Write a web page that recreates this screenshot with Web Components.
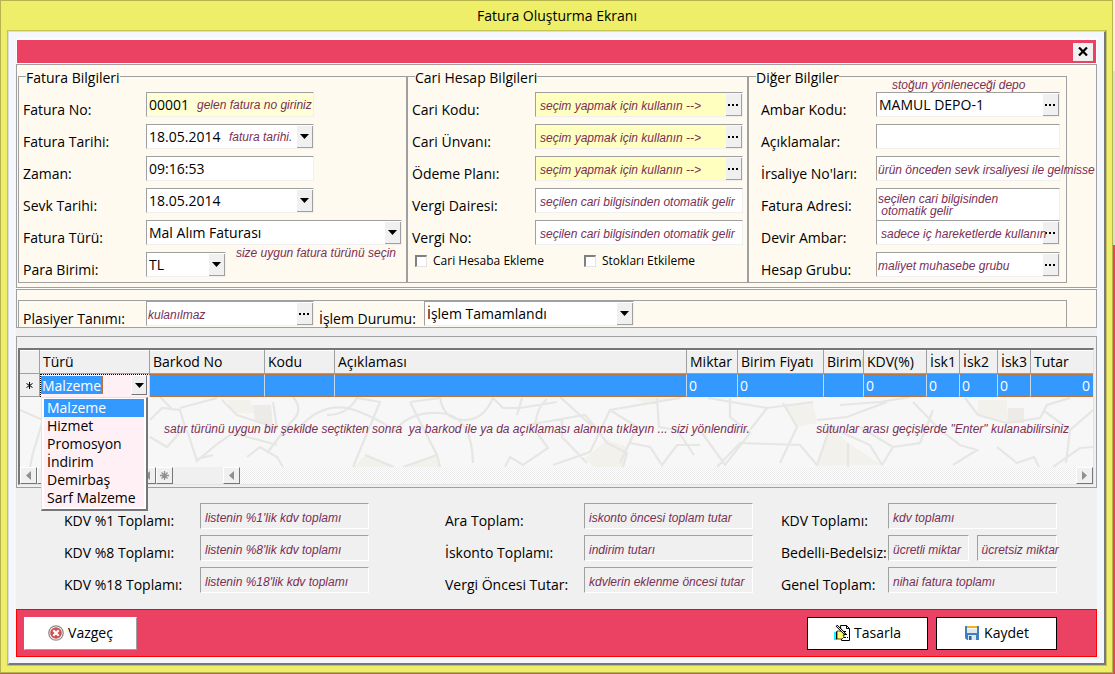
<!DOCTYPE html>
<html lang="tr">
<head>
<meta charset="utf-8">
<title>Fatura Oluşturma Ekranı</title>
<style>
  :root {
    --line: #a0a0a0;
    --face: #f0f0f0;
    --cream: #fffaf0;
    --rose: #eb4263;
    --pick: #3399ff;
    --note: #7a2f55;
  }
  body {
    margin: 0;
    font: 14px/18px "Open Sans", "Noto Sans", sans-serif;
    color: #000;
    background: linear-gradient(#f6efe2 0 71px, #d3e4d4 71px 245px, #eb4263 245px) no-repeat #eb4263;
  }
</style>
</head>
<body>
<app-window caption="Fatura Oluşturma Ekranı">
  <title-strip></title-strip>
  <form-panel>
    <group-columns>
      <group-box caption="Fatura Bilgileri">
        <form-field class="short" label="Fatura No:" value="00001" hint="gelen fatura no giriniz" tone="pale" hint-at="far"></form-field>
        <form-field class="short" label="Fatura Tarihi:" value="18.05.2014" hint="fatura tarihi." kind="date" hint-at="farther"></form-field>
        <form-field class="short" label="Zaman:" value="09:16:53"></form-field>
        <form-field class="short" label="Sevk Tarihi:" value="18.05.2014" kind="date"></form-field>
        <form-field label="Fatura Türü:" value="Mal Alım Faturası" kind="select" hint="size uygun fatura türünü seçin" hint-at="below"></form-field>
        <form-field class="tiny" label="Para Birimi:" value="TL" kind="select"></form-field>
      </group-box>
      <group-box caption="Cari Hesap Bilgileri">
        <form-field label="Cari Kodu:" hint="seçim yapmak için kullanın --&gt;" kind="lookup" tone="yellow"></form-field>
        <form-field label="Cari Ünvanı:" hint="seçim yapmak için kullanın --&gt;" kind="lookup" tone="yellow"></form-field>
        <form-field label="Ödeme Planı:" hint="seçim yapmak için kullanın --&gt;" kind="lookup" tone="yellow"></form-field>
        <form-field label="Vergi Dairesi:" hint="seçilen cari bilgisinden otomatik gelir"></form-field>
        <form-field label="Vergi No:" hint="seçilen cari bilgisinden otomatik gelir"></form-field>
        <check-row><check-item label="Cari Hesaba Ekleme"></check-item><check-item label="Stokları Etkileme"></check-item></check-row>
      </group-box>
      <group-box class="inset" caption="Diğer Bilgiler">
        <form-field label="Ambar Kodu:" value="MAMUL DEPO-1" kind="lookup" hint="stoğun yönleneceği depo" hint-at="above"></form-field>
        <form-field label="Açıklamalar:"></form-field>
        <form-field label="İrsaliye No'ları:" hint="ürün önceden sevk irsaliyesi ile gelmisse" hint-at="near"></form-field>
        <form-field label="Fatura Adresi:" hint="seçilen cari bilgisinden&#10; otomatik gelir" kind="area" hint-at="near"></form-field>
        <form-field label="Devir Ambar:" hint="sadece iç hareketlerde kullanın" kind="lookup"></form-field>
        <form-field label="Hesap Grubu:" hint="maliyet muhasebe grubu" kind="lookup" hint-at="near"></form-field>
      </group-box>
    </group-columns>
  </form-panel>
  <form-panel class="second">
    <status-row>
      <form-field class="short" label="Plasiyer Tanımı:" hint="kulanılmaz" kind="lookup" hint-at="near"></form-field>
      <form-field class="status" label="İşlem Durumu:" value="İşlem Tamamlandı" kind="select"></form-field>
    </status-row>
  </form-panel>
  <item-grid></item-grid>
  <totals-area>
    <totals-group slot="a" style="--label-w:136px">
      <form-field label="KDV %1 Toplamı:" hint="listenin %1'lik kdv toplamı" tone="flat"></form-field>
      <form-field label="KDV %8 Toplamı:" hint="listenin %8'lik kdv toplamı" tone="flat"></form-field>
      <form-field label="KDV %18 Toplamı:" hint="listenin %18'lik kdv toplamı" tone="flat"></form-field>
    </totals-group>
    <totals-group slot="b" style="--label-w:139px">
      <form-field label="Ara Toplam:" hint="iskonto öncesi toplam tutar" tone="flat"></form-field>
      <form-field label="İskonto Toplamı:" hint="indirim tutarı" tone="flat"></form-field>
      <form-field label="Vergi Öncesi Tutar:" hint="kdvlerin eklenme öncesi tutar" tone="flat"></form-field>
    </totals-group>
    <totals-group slot="c" style="--label-w:107px">
      <form-field label="KDV Toplamı:" hint="kdv toplamı" tone="flat"></form-field>
      <form-field label="Bedelli-Bedelsiz:" hint="ücretli miktar" second-hint="ücretsiz miktar" tone="flat"></form-field>
      <form-field label="Genel Toplam:" hint="nihai fatura toplamı" tone="flat"></form-field>
    </totals-group>
  </totals-area>
  <action-bar>
    <action-button class="plain" icon="cancel">Vazgeç</action-button>
    <action-button slot="end" icon="design">Tasarla</action-button>
    <action-button slot="end" icon="save">Kaydet</action-button>
  </action-bar>
</app-window>

<script>
const BASE = `
  *, *::before, *::after { box-sizing: border-box; }
  input, select, button, textarea { font: inherit; color: inherit; margin: 0; border-radius: 0; outline: none; }
  button { padding: 0; }
`;
const ARROW = '<svg width="9" height="5" viewBox="0 0 9 5" aria-hidden="true"><path d="M0 0h9L4.5 5z"/></svg>';
const DOTS = '<svg width="11" height="2" viewBox="0 0 11 2" aria-hidden="true"><path d="M0 0h2v2H0zM4 0h2v2H4zM8 0h2v2H8z"/></svg>';

class Base extends HTMLElement {
  constructor() {
    super();
    this.attachShadow({ mode: 'open' });
  }
  connectedCallback() {
    this.shadowRoot.innerHTML = `<style>${BASE}${this.css()}</style>${this.html()}`;
  }
  attr(name) { return (this.getAttribute(name) || '').replace(/&/g, '&amp;').replace(/</g, '&lt;').replace(/"/g, '&quot;'); }
}

customElements.define('app-window', class extends Base {
  css() { return `
    :host { display: block; box-sizing: border-box; margin: 0 2px 1px 0; padding: 0 6px 7px 7px;
      border: 1px solid #b5b44e; background: #efee69; }
    h1 { margin: 0; height: 30px; font: inherit; line-height: 30px; text-align: center; }
    main { border: solid; border-width: 1px 2px 2px 1px; border-color: #d9dde0 #77777c #77777c #d9dde0;
      outline: 1px solid #c4c455; background: #f4f8fd; padding: 6px 7px; }
    .client { background: linear-gradient(#fff 0 290px, var(--face) 290px); padding-top: 2px; }
  `; }
  html() { return `<h1>${this.attr('caption')}</h1><main><div class="client"><slot></slot></div></main>`; }
});

customElements.define('title-strip', class extends Base {
  css() { return `
    :host { display: flex; justify-content: flex-end; align-items: center; box-sizing: border-box;
      height: 23px; margin: 0 1px; padding-right: 3px; background: var(--rose); }
    button { width: 20px; height: 18px; border: 0; background: var(--face); display: grid; place-items: center; }
  `; }
  html() { return `<button type="button" aria-label="Kapat"><svg width="10" height="9" viewBox="0 0 10 9" aria-hidden="true"><path d="M1 .5l8 8M9 .5l-8 8" stroke="#000" stroke-width="2.2"/></svg></button>`; }
});

customElements.define('form-panel', class extends Base {
  css() { return `
    :host { display: block; box-sizing: border-box; margin-top: 1px; padding: 3px 29px 4px 1px;
      border: 1px solid var(--line); background: var(--cream); }
    :host(.second) { padding: 10px 29px 0 1px; }
  `; }
  html() { return '<slot></slot>'; }
});

customElements.define('group-columns', class extends Base {
  css() { return ':host { display: grid; grid-template-columns: 389fr 341fr 319fr; }'; }
  html() { return '<slot></slot>'; }
});

customElements.define('group-box', class extends Base {
  css() { return `
    :host { display: block; min-width: 0; }
    fieldset { min-width: 0; margin: 0; padding: 7px 4px 5px 4px; border: 1px solid var(--line); box-shadow: 1px 0 #c8c4be; }
    :host(.inset) fieldset { padding: 7px 6px 5px 12px; box-shadow: none; --label-w: 115px; }
    legend { height: 17px; line-height: 19px; padding: 0; margin-left: 3px; }
    :host(.inset) legend { margin-left: -5px; }
    .rows { display: flex; flex-direction: column; gap: 7px; }
  `; }
  html() { return `<fieldset><legend>${this.attr('caption')}</legend><div class="rows"><slot></slot></div></fieldset>`; }
});

customElements.define('status-row', class extends Base {
  css() { return ':host { display: flex; gap: 5px; height: 27px; box-sizing: border-box; padding-left: 4px; border: 1px solid var(--line); border-bottom: 0; }'; }
  html() { return '<slot></slot>'; }
});

/* A caption with its box: text, date, select, lookup or area. */
customElements.define('form-field', class extends Base {
  css() { return `
    :host { display: grid; grid-template-columns: var(--label-w, 123px) minmax(0, 1fr); height: 25px; }
    :host(.short) { grid-template-columns: var(--label-w, 123px) 168px; }
    :host(.tiny) { grid-template-columns: var(--label-w, 123px) 80px; }
    :host(.status) { grid-template-columns: 105px 210px; }
    label { padding-top: 9px; line-height: 18px; white-space: nowrap; }
    .boxes { display: flex; gap: 8px; }
    .box { position: relative; flex: 1; min-width: 0; display: flex; height: 25px; background: #fff;
      border: 1px solid; border-color: var(--line) #f0f0f0 #f0f0f0 var(--line); }
    .box.area { height: 33px; }
    .pale { background: #ffffd6; }
    .yellow { background: #ffffc0; }
    .flat { height: 26px; background: transparent; border-color: var(--line) #fff #fff var(--line); }
    input, select, textarea { flex: 1; min-width: 0; width: 0; height: 100%; padding: 0 2px; border: 0;
      background: transparent; appearance: none; resize: none; }
    .btn { flex: none; width: 16px; height: 22px; margin-top: 1px; border: solid; border-width: 0 1px 1px 0;
      border-color: var(--line); background: var(--face); display: grid; place-items: center; }
    span.btn { pointer-events: none; }
    .hint { position: absolute; left: 4px; top: 6px; font: italic 12px/14px "Liberation Sans", Arial, sans-serif;
      color: var(--note); white-space: pre; pointer-events: none; }
    .flat .hint { top: 7px; }
    .near { left: 1px; }
    .far { left: 50px; top: 5px; }
    .farther { left: 82px; top: 5px; }
    .above { left: 15px; top: -15px; }
    .below { left: auto; right: 5px; top: 25px; }
    .area .hint { top: 4px; line-height: 12px; }
  `; }
  box(hint) {
    const kind = this.getAttribute('kind') || 'text', value = this.attr('value');
    const n = this.attr('label').replace(':', '');
    const id = hint === this.attr('hint') ? 'f' : 'g';
    const h = hint ? `<span class="hint ${this.attr('hint-at')}" id="${id}h">${hint}</span>` : '';
    const a = `id="${id}"${h ? ` aria-describedby="${id}h"` : ''}${id === 'g' ? ` aria-label="${n}"` : ''}`;
    const inner = {
      text: `<input ${a} type="text" value="${value}">`,
      area: `<textarea ${a}></textarea>`,
      date: `<input ${a} type="text" value="${value}"><button class="btn" type="button" aria-label="${n} takvimi">${ARROW}</button>`,
      lookup: `<input ${a} type="text" value="${value}"><button class="btn" type="button" aria-label="${n} ara">${DOTS}</button>`,
      select: `<select ${a}><option>${value}</option></select><span class="btn">${ARROW}</span>`
    }[kind];
    return `<div class="box ${kind} ${this.attr('tone')}">${inner}${h}</div>`;
  }
  html() {
    const second = this.attr('second-hint');
    return `<label for="f">${this.attr('label')}</label><div class="boxes">${this.box(this.attr('hint'))}${second ? this.box(second) : ''}</div>`;
  }
});

customElements.define('check-row', class extends Base {
  css() { return ':host { display: grid; box-sizing: border-box; grid-template-columns: 170fr 160fr; height: 25px; padding: 1px 0 0 3px; }'; }
  html() { return '<slot></slot>'; }
});

customElements.define('check-item', class extends Base {
  css() { return `
    label { display: flex; align-items: center; gap: 6px; font-size: 12px; line-height: 16px; white-space: nowrap; }
    input { appearance: none; width: 12px; height: 12px; background: #fff; border: solid; border-width: 2px 1px 1px 2px;
      border-color: #808080 #e3e3e3 #e3e3e3 #808080; }
  `; }
  html() { return `<label><input type="checkbox">${this.attr('label')}</label>`; }
});

const COLS = [['', 20, ''], ['Türü', 110, ''], ['Barkod No', 115, ''], ['Kodu', 70, ''], ['Açıklaması', 0, ''],
  ['Miktar', 51, '0'], ['Birim Fiyatı', 86, '0'], ['Birimi', 40, ''], ['KDV(%)', 63, '0'], ['İsk1', 33, '0'],
  ['İsk2', 38, '0'], ['İsk3', 33, '0'], ['Tutar', 62, '0']];

customElements.define('item-grid', class extends Base {
  css() { return `
    :host { display: block; margin-top: 8px; padding: 11px 2px 2px 1px; border: 1px solid var(--line); box-sizing: border-box; }
    .grid { border: solid; border-width: 2px 1px 1px 2px; border-color: #75757a #e3e3e3 #e3e3e3 #75757a; background: var(--face); }
    table { width: 100%; table-layout: fixed; border-collapse: separate; border-spacing: 0; }
    th, td { padding: 0; font-weight: 400; text-align: left; white-space: nowrap; }
    thead th { height: 24px; padding-left: 3px; overflow: hidden; border-right: 1px solid var(--line);
      border-bottom: 1px solid var(--line); box-shadow: inset 0 1px #fff; }
    thead th:last-child, td:last-child { border-right: 0; }
    tbody th { height: 23px; border-right: 1px solid var(--line); border-bottom: 1px solid var(--line); text-align: center; vertical-align: middle; }
    tbody th svg { display: block; margin: 0 auto; }
    td { height: 23px; padding-left: 2px; color: #fff; background: var(--pick); border-right: 1px solid #c5d9ee;
      border-top: 1px dotted #b8743c; border-bottom: 1px dotted #b8743c; }
    td:last-child { text-align: right; padding-right: 3px; }
    td.kind { position: relative; padding: 0 2px 0 0; background: #fff0f5; border-top: 1px dotted #000; border-left: 1px dotted #000; border-bottom: 0; }
    .combo { display: flex; height: 22px; }
    select { flex: 1; min-width: 0; appearance: none; border: 0; padding: 0 1px; color: #fff;
      background: linear-gradient(90deg, var(--pick) 61px, #b8743c 61px 62px, #fff0f5 62px) 0 1px / 100% 18px no-repeat; }
    .drop { flex: none; width: 16px; height: 20px; display: grid; place-items: center; background: var(--face); pointer-events: none; }
    .drop, .nav button, .scroll button { border: 1px solid; border-color: #fff #75757a #75757a #fff; }
    ul { position: absolute; z-index: 2; left: 0; top: 22px; width: 107px; margin: 0; padding: 1px 2px 2px 2px; list-style: none; color: #000;
      border: solid; border-width: 1px 2px 2px 1px; border-color: #e3e3e3 #75757a #75757a #e3e3e3; background: #fff; }
    li { height: 18px; padding-left: 3px; background: #fff0f5; }
    li[aria-selected=true] { color: #fff; background: var(--pick); }
    .empty { position: relative; height: 70px; background: #f7f7f7; display: flex; justify-content: space-between; padding: 24px 24px 0 144px; }
    .empty svg { position: absolute; inset: 0; width: 100%; height: 100%; }
    p { position: relative; margin: 0; font: italic 12px/16px "Liberation Sans", Arial, sans-serif; color: var(--note); white-space: pre; }
    .bottom { display: flex; height: 17px; }
    .nav { display: flex; width: 203px; }
    .bottom button { flex: none; width: 17px; height: 17px; background: var(--face); display: grid; place-items: center; }
    .scroll { flex: 1; display: flex; justify-content: space-between;
      background: repeating-conic-gradient(#fff 0 25%, #ebebeb 0 50%) 0 0 / 2px 2px; }
  `; }
  html() {
    const head = COLS.map(c => `<th scope="col">${c[0]}</th>`).join('');
    const cols = COLS.map(c => `<col${c[1] ? ` style="width:${c[1]}px"` : ''}>`).join('');
    const kinds = ['Malzeme', 'Hizmet', 'Promosyon', 'İndirim', 'Demirbaş', 'Sarf Malzeme'];
    const cells = COLS.slice(2).map(c => `<td>${c[2]}</td>`).join('');
    const tri = d => `<svg width="5" height="9" viewBox="0 0 5 9" fill="#909090" aria-hidden="true"><path d="${d}"/></svg>`;
    const L = tri('M5 0v9L0 4.500z'), R = tri('M0 0v9l5-4.500z');
    const star = c => `<svg width="9" height="9" viewBox="0 0 9 9" stroke="${c}" stroke-width="1.300" aria-hidden="true"><path d="M4.500 0v9M0 4.500h9M1.500 1.500l6 6M7.500 1.500l-6 6"/></svg>`;
    const names = ['İlk', 'Önceki', 'Sonraki', 'Son', 'Ekle', 'Sil', 'Kaydet', 'Vazgeç', 'Yenile'];
    const nav = names.map((n, i) => `<button type="button" aria-label="${n}">${i === 8 ? star('#909090') : L}</button>`).join('');
    return `<div class="grid">
      <table><colgroup>${cols}</colgroup><thead><tr>${head}</tr></thead>
      <tbody><tr><th scope="row" aria-label="Yeni satır"><svg width="7" height="7" viewBox="0 0 7 7" stroke="#000" aria-hidden="true"><path d="M3.500 0v7M.5 1.500l6 4M6.500 1.500l-6 4"/></svg></th>
      <td class="kind"><div class="combo"><select aria-label="Türü">${kinds.map(k => `<option>${k}</option>`).join('')}</select><span class="drop">${ARROW}</span></div>
      <ul role="listbox" aria-label="Türü">${kinds.map((k, i) => `<li role="option" aria-selected="${i === 0}">${k}</li>`).join('')}</ul></td>${cells}</tr></tbody></table>
      <div class="empty">
        <svg viewBox="0 0 1073 70" preserveAspectRatio="xMidYMid slice" fill="none" stroke="#e6e6e4" stroke-width="2.200" aria-hidden="true">
          <g fill="#f3f1ec" stroke="none"><path d="M207 3h23l5 13h-22zM417 58l-34 12h37zM345 58l29 12h-41zM565 61l22-18 21 7-5 20h-30zM763 8l30-2 4 20-20 4zM797 69l13-39 18 16 34 22zM958 3h29v21l-29-6zM613 1h40l-26 6z"/><path d="M233 8h18l2 22-18-5zM988 11h16v15h-17z" fill="#ecebe8"/></g>
          <path d="M0 13l23 10-10 33-3 14M130 23l12-12 18 2 5 17-18 20-17-10M140 0l13 13M160 11l37-10M167 33l10 31 20-17 16-11 44 12M177 62l16-4M202 3l15 15 40 13-4-26M273 0q12 14-3 26l-23 30M227 60l13-10 17 10 6 10"/>
          <path d="M277 33Q305 0 340 15T373 36M307 18q20 0 30-17l23 4-27 65M345 58l29 12M390 5l27 53 3 12M390 5l30-4M417 58l-34 12M373 36q15-22 47-20t33 50M420 0q3 22 23 23t30-22l10 10h17l37-6M502 1l-5 17M513 30l15 21-25 17-13-8-5 10M507 28l58-10 10 12 12 16 20 10-4 14M542 21v19l25 26M540 0l33 30M533 68l37-13 20-42 70-12M590 13l27 17-17 36M610 46l20 4 12 18 15-20h23M637 1l2 29 18 3 17 25M527 2q-10 8-12 26"/>
          <path d="M688 1l59 10 46-6M710 1v19l20 16-25 32-25-35M747 11l-17 22M763 6l14 24-17 36M697 70l23-24 60 2 17 20 13-38 40 18 12 20M840 30l33 20-11 18M820 8l40-3 30-5M797 23l30-3 40-15M913 13l-13 33-27 4M893 5l27 28 20 15 17 5-24 15M945 1l13 17 29 8 33-5 7-13 23-7M977 50l20 16 17-6 5 10M1023 13l27 20 23-20M1050 33l-4 33M1033 70l27-19 13-1M828 46v24"/>
        </svg>
        <p>satır türünü uygun bir şekilde seçtikten sonra  ya barkod ile ya da açıklaması alanına tıklayın ... sizi yönlendirir.</p>
        <p>sütunlar arası geçişlerde "Enter" kulanabilirsiniz</p>
      </div>
      <div class="bottom"><div class="nav">${nav}</div><div class="scroll"><button type="button" aria-label="Sola kaydır">${L}</button><button type="button" aria-label="Sağa kaydır">${R}</button></div></div>
    </div>`;
  }
});

customElements.define('totals-area', class extends Base {
  css() { return `
    :host { display: grid; box-sizing: border-box; grid-template-columns: 305fr 76fr 308fr 28fr 276fr; padding: 15px 40px 17px 48px; }
    .b { grid-column: 3; }
    .c { grid-column: 5; }
  `; }
  html() { return '<div><slot name="a"></slot></div><div class="b"><slot name="b"></slot></div><div class="c"><slot name="c"></slot></div>'; }
});

customElements.define('totals-group', class extends Base {
  css() { return ':host { display: flex; flex-direction: column; gap: 7px; }'; }
  html() { return '<slot></slot>'; }
});

customElements.define('action-bar', class extends Base {
  css() { return `
    :host { display: flex; justify-content: space-between; align-items: center; box-sizing: border-box; height: 48px;
      padding: 0 39px 0 7px; border: 1px solid #f00; background: var(--rose); }
    div { display: flex; gap: 8px; }
  `; }
  html() { return '<div><slot></slot></div><div><slot name="end"></slot></div>'; }
});

const ICONS = {
  cancel: '<circle cx="8" cy="8" r="7.200" fill="#fff" stroke="#8c8c8c" stroke-width="1.300"/><circle cx="8" cy="8" r="5.800" fill="#cf5050"/><path d="M5.300 5.300l5.400 5.400M10.700 5.300l-5.400 5.400" stroke="#fff" stroke-width="2.200"/>',
  design: '<path d="M6.500.5h6l3 3v12h-8z" fill="#fff" stroke="#000"/><path d="M12.500.5v3h3" fill="none" stroke="#000"/><path d="M10 6.500h3M11 9.500h3M10 12.500h4" stroke="#000" stroke-dasharray="2 1"/><path d="M3 6h5l3 2v2H9l1 2-2 2H3z" fill="#ffff70" stroke="#000" stroke-width=".7"/><path d="M0 7h2v8H0z" fill="#0ff"/><path d="M2 6.500h1v8H2z"/><path d="M2.500.5l9 9" stroke="#000" stroke-width="2.200"/><path d="M3 1l7.500 7.500" stroke="#ff6"/>',
  save: '<path d="M1 1h14v14H3l-2-2z" fill="#3f7fbf"/><path d="M3 1h10v7H3z" fill="#f4f6f8"/><path d="M3 1h10v2H3z" fill="#f5b21c"/><path d="M3 5h10M3 7h10" stroke="#cfd8e0"/><path d="M4 10h8v5H4z" fill="#dde6ee"/><path d="M5 11h2.500v4H5z" fill="#2f639c"/>'
};

customElements.define('action-button', class extends Base {
  css() { return `
    :host { display: block; }
    button { display: flex; align-items: center; justify-content: center; gap: 4px; width: 121px; height: 33px;
      border: 1px solid #000; background: #fff; }
    :host(.plain) button { width: 113px; border-color: #fff var(--line) var(--line) #fff; }
  `; }
  html() { return `<button type="button"><svg width="16" height="16" viewBox="0 0 16 16" aria-hidden="true">${ICONS[this.getAttribute('icon')]}</svg><slot></slot></button>`; }
});
</script>
</body>
</html>
